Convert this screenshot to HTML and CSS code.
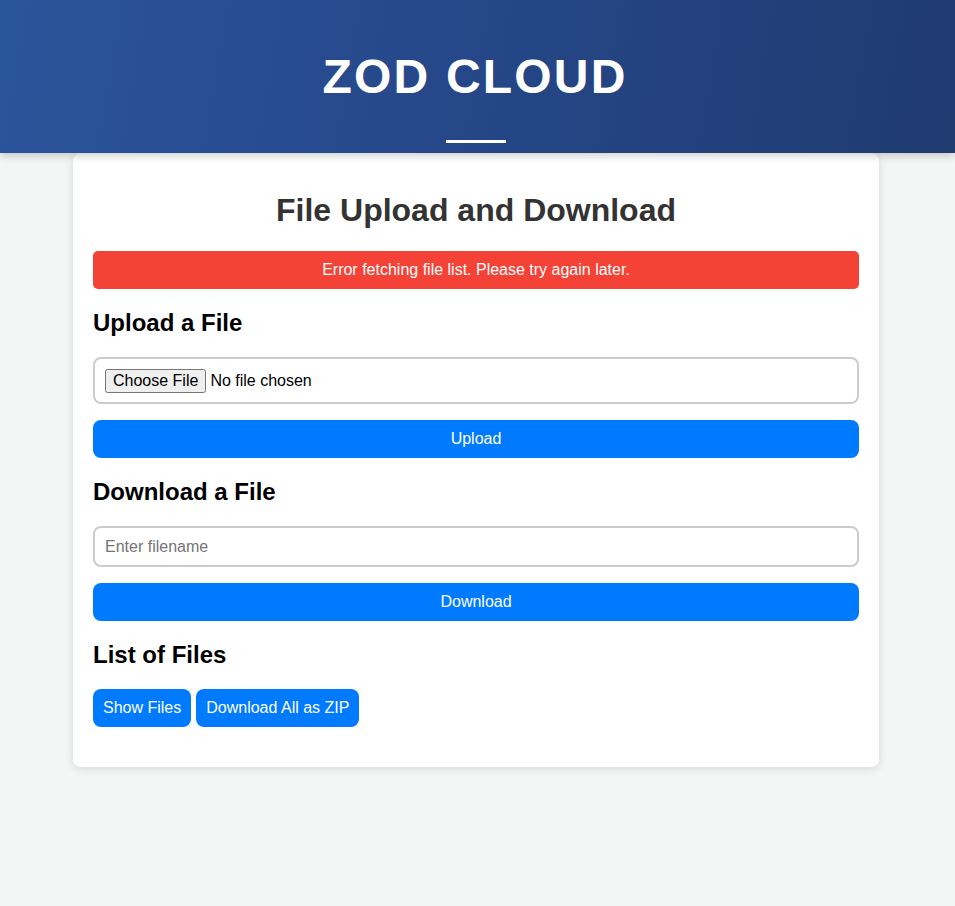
FILE: index.html
```html
<!DOCTYPE html>
<html lang="en">
<head>
<meta charset="utf-8">
<title>ZOD CLOUD</title>
<link rel="stylesheet" href="styles.css">
</head>
<body>
<header class="site-header">
  <h1 class="brand">ZOD CLOUD</h1>
  <div class="brand-bar"></div>
</header>
<main class="card">
  <h2 class="page-title">File Upload and Download</h2>
  <div class="error-box">Error fetching file list. Please try again later.</div>

  <h3 class="section-title">Upload a File</h3>
  <input class="field file-field" type="file">
  <button class="btn btn-block">Upload</button>

  <h3 class="section-title">Download a File</h3>
  <input class="field text-field" type="text" placeholder="Enter filename">
  <button class="btn btn-block">Download</button>

  <h3 class="section-title">List of Files</h3>
  <div class="btn-row">
    <button class="btn">Show Files</button>
    <button class="btn">Download All as ZIP</button>
  </div>
</main>
</body>
</html>
```
FILE: styles.css
```css
* { box-sizing: border-box; }

html, body {
  margin: 0;
  padding: 0;
}

body {
  background: #f4f5f5;
  font-family: "Liberation Sans", Arial, sans-serif;
  color: #000;
  min-height: 906px;
}

.site-header {
  position: relative;
  z-index: 2;
  height: 153px;
  padding-top: 49px;
  background: linear-gradient(100deg, #2b559b 0%, #26488a 45%, #1f3b70 100%);
  box-shadow: 0 2px 9px rgba(0, 0, 0, 0.22);
  display: flex;
  flex-direction: column;
  align-items: center;
}

.brand {
  margin: 0;
  padding-right: 5px;
  color: #fff;
  font-size: 48px;
  font-weight: bold;
  letter-spacing: 2.2px;
  line-height: 55px;
}

.brand-bar {
  margin-top: 36px;
  margin-right: 4px;
  width: 60px;
  height: 3px;
  background: #fff;
}

.card {
  position: relative;
  z-index: 1;
  width: 806px;
  margin: 0 0 0 calc(50% - 404.5px);
  padding: 20px 20px 40px;
  background: #fff;
  border-radius: 8px;
  box-shadow: 0 2px 10px rgba(0, 0, 0, 0.12);
}

.page-title {
  margin: 19px 0 22px;
  text-align: center;
  font-size: 32px;
  line-height: 37px;
  font-weight: bold;
  color: #333;
}

.error-box {
  background: #f44336;
  color: #fff;
  text-align: center;
  font-size: 16px;
  line-height: 18px;
  padding: 10px;
  border-radius: 5px;
}

.section-title {
  margin: 20px 0 20px;
  font-size: 24px;
  line-height: 28px;
  font-weight: bold;
  color: #000;
}

.field {
  display: block;
  width: 100%;
  font-family: "Liberation Sans", Arial, sans-serif;
  font-size: 16px;
  border: 2px solid #ccc;
  border-radius: 8px;
  background: #fff;
  margin: 0 0 16px;
}

.file-field {
  height: 47px;
  padding: 10px;
}

.text-field {
  height: 41px;
  padding: 10px;
  color: #000;
}

.text-field::placeholder {
  color: #757575;
}

.btn {
  font-family: "Liberation Sans", Arial, sans-serif;
  font-size: 16px;
  line-height: 18px;
  color: #fff;
  background: #007bff;
  border: none;
  border-radius: 8px;
  padding: 10px;
  height: 38px;
  cursor: pointer;
}

.btn-block {
  display: block;
  width: 100%;
}

.btn-row {
  display: flex;
  gap: 5px;
}
```
